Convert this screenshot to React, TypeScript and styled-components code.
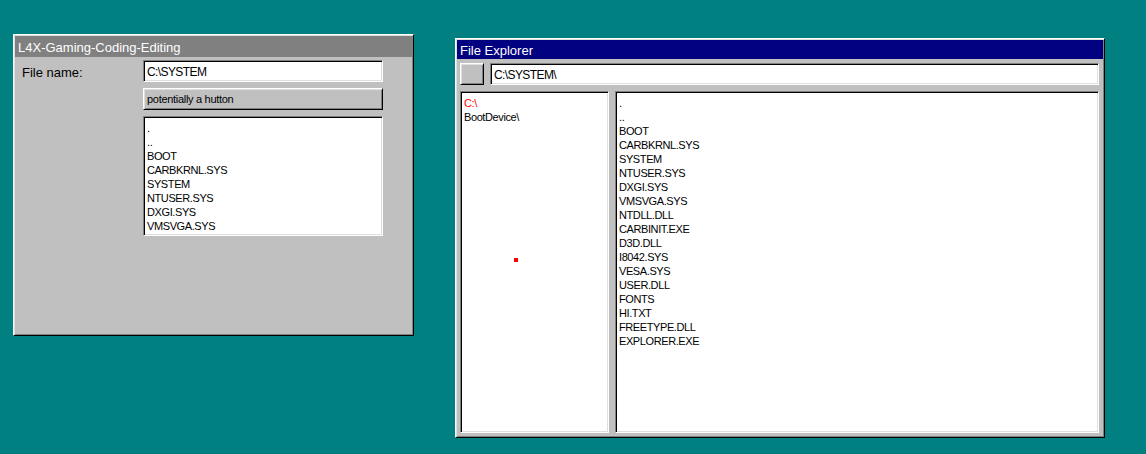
import React from "react";
import styled, { createGlobalStyle } from "styled-components";

const GlobalStyle = createGlobalStyle`
  html, body {
    margin: 0;
    padding: 0;
    background: #008080;
  }
  body {
    font-family: "Liberation Sans", Arial, sans-serif;
  }
`;

const Desktop = styled.div`
  position: relative;
  width: 1146px;
  height: 454px;
  background: #008080;
  overflow: hidden;
`;

const Window = styled.div<{ $left: number; $top: number; $w: number; $h: number }>`
  position: absolute;
  left: ${(p) => p.$left}px;
  top: ${(p) => p.$top}px;
  width: ${(p) => p.$w}px;
  height: ${(p) => p.$h}px;
  box-sizing: border-box;
  display: flex;
  flex-direction: column;
  background: #c0c0c0;
  border: 1px solid;
  border-color: #ffffff #000000 #000000 #ffffff;
  box-shadow: inset 1px 1px #dfdfdf, inset -1px -1px #808080;
  padding: 1px;
`;

const TitleBar = styled.div<{ $active?: boolean; $h: number }>`
  height: ${(p) => p.$h}px;
  box-sizing: border-box;
  padding: 2px 0 0 3px;
  line-height: ${(p) => p.$h - 2}px;
  font-size: 13px;
  color: #ffffff;
  background: ${(p) => (p.$active ? "#000080" : "#808080")};
  white-space: nowrap;
  flex-shrink: 0;
`;

const DialogBody = styled.div`
  display: grid;
  grid-template-columns: 121px 240px;
  grid-auto-rows: min-content;
  row-gap: 6px;
  padding: 3px 0 0 7px;
`;

const Label = styled.div`
  font-size: 13px;
  color: #000;
  display: flex;
  align-items: flex-end;
  padding-bottom: 2px;
  line-height: 15px;
`;

const TextField = styled.div<{ $col?: number }>`
  grid-column: ${(p) => p.$col ?? "auto"};
  height: 22px;
  box-sizing: border-box;
  background: #ffffff;
  border: 1px solid;
  border-color: #808080 #ffffff #ffffff #808080;
  box-shadow: inset 1px 1px #000000, inset -1px -1px #dfdfdf;
  padding: 3px 0 0 3px;
  font-size: 12px;
  letter-spacing: -0.6px;
  line-height: 16px;
  color: #000;
  white-space: nowrap;
  overflow: hidden;
`;

const Button = styled.div<{ $col?: number; $w?: number }>`
  grid-column: ${(p) => p.$col ?? "auto"};
  height: 22px;
  ${(p) => (p.$w ? `width: ${p.$w}px;` : "")}
  box-sizing: border-box;
  background: #c0c0c0;
  border: 1px solid;
  border-color: #ffffff #000000 #000000 #ffffff;
  box-shadow: inset 1px 1px #dfdfdf, inset -1px -1px #808080;
  padding: 2px 0 0 3px;
  font-size: 11px;
  letter-spacing: -0.3px;
  line-height: 17px;
  color: #000;
  white-space: nowrap;
`;

const ListBox = styled.div<{ $col?: number; $h?: number }>`
  grid-column: ${(p) => p.$col ?? "auto"};
  position: relative;
  ${(p) => (p.$h ? `height: ${p.$h}px;` : "")}
  box-sizing: border-box;
  background: #ffffff;
  border: 1px solid;
  border-color: #808080 #ffffff #ffffff #808080;
  box-shadow: inset 1px 1px #000000, inset -1px -1px #dfdfdf;
  padding: 4px 3px;
  overflow: hidden;
`;

const ListItem = styled.div<{ $selected?: boolean }>`
  font-size: 11px;
  letter-spacing: -0.4px;
  line-height: 14px;
  height: 14px;
  color: ${(p) => (p.$selected ? "#ff0000" : "#000000")};
  white-space: nowrap;
`;

const ExplorerBody = styled.div`
  flex: 1;
  display: flex;
  flex-direction: column;
  gap: 6px;
  padding: 4px 4px 3px 3px;
  min-height: 0;
`;

const AddressRow = styled.div`
  display: grid;
  grid-template-columns: 24px 1fr;
  column-gap: 6px;
  height: 22px;
`;

const Panes = styled.div`
  flex: 1;
  display: grid;
  grid-template-columns: 149px 1fr;
  column-gap: 6px;
  min-height: 0;
`;

const Marker = styled.div`
  position: absolute;
  left: 53px;
  top: 166px;
  width: 4px;
  height: 4px;
  background: #ff0000;
`;

const dialogFiles = [".", "..", "BOOT", "CARBKRNL.SYS", "SYSTEM", "NTUSER.SYS", "DXGI.SYS", "VMSVGA.SYS"];

const explorerFiles = [
  ".",
  "..",
  "BOOT",
  "CARBKRNL.SYS",
  "SYSTEM",
  "NTUSER.SYS",
  "DXGI.SYS",
  "VMSVGA.SYS",
  "NTDLL.DLL",
  "CARBINIT.EXE",
  "D3D.DLL",
  "I8042.SYS",
  "VESA.SYS",
  "USER.DLL",
  "FONTS",
  "HI.TXT",
  "FREETYPE.DLL",
  "EXPLORER.EXE",
];

export default function App() {
  return (
    <>
      <GlobalStyle />
      <Desktop>
        <Window $left={13} $top={34} $w={401} $h={302}>
          <TitleBar $h={21}>L4X-Gaming-Coding-Editing</TitleBar>
          <DialogBody>
            <Label>File name:</Label>
            <TextField>C:\SYSTEM</TextField>
            <Button $col={2}>potentially a hutton</Button>
            <ListBox $col={2} $h={120}>
              {dialogFiles.map((f) => (
                <ListItem key={f}>{f}</ListItem>
              ))}
            </ListBox>
          </DialogBody>
        </Window>

        <Window $left={455} $top={38} $w={650} $h={400}>
          <TitleBar $active $h={19}>File Explorer</TitleBar>
          <ExplorerBody>
            <AddressRow>
              <Button />
              <TextField>C:\SYSTEM\</TextField>
            </AddressRow>
            <Panes>
              <ListBox>
                <ListItem $selected>C:\</ListItem>
                <ListItem>BootDevice\</ListItem>
                <Marker />
              </ListBox>
              <ListBox>
                {explorerFiles.map((f) => (
                  <ListItem key={f}>{f}</ListItem>
                ))}
              </ListBox>
            </Panes>
          </ExplorerBody>
        </Window>
      </Desktop>
    </>
  );
}
